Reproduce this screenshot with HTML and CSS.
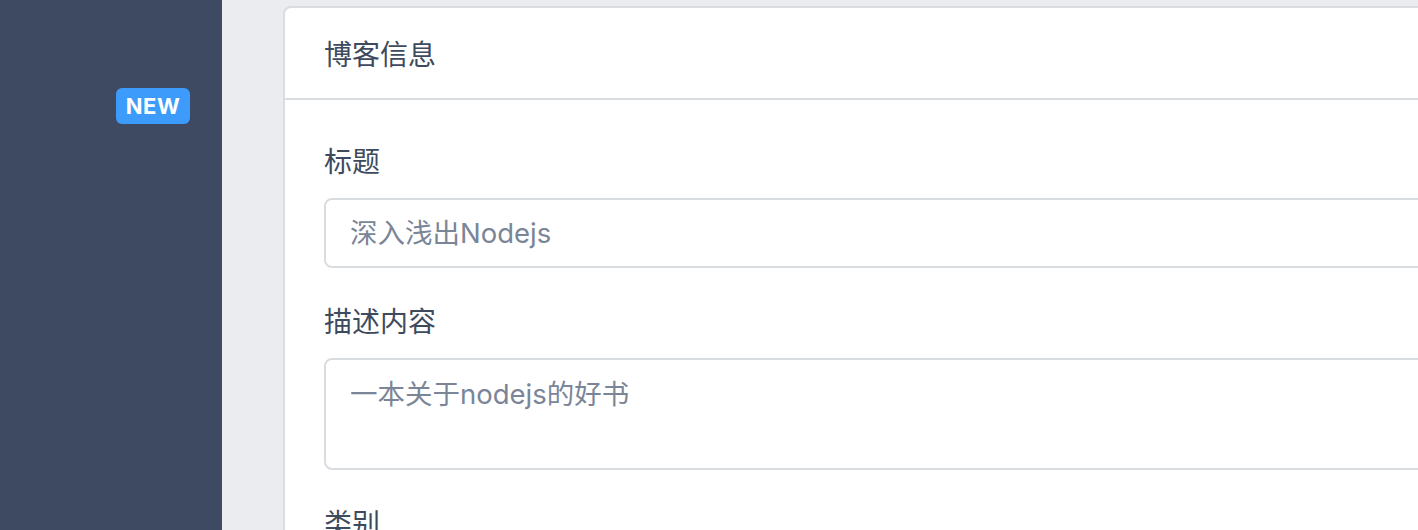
FILE: index.html
```html
<!DOCTYPE html>
<html lang="zh">
<head>
<meta charset="utf-8">
<title>博客信息</title>
<link rel="stylesheet" href="styles.css">
</head>
<body>
<div class="layout">
  <aside class="sidebar">
    <div class="sidebar-item">
      <span class="badge">NEW</span>
    </div>
  </aside>
  <main class="main">
    <section class="card">
      <header class="card-header">博客信息</header>
      <div class="card-body">
        <div class="field">
          <label class="field-label">标题</label>
          <input class="input" type="text" placeholder="深入浅出Nodejs">
        </div>
        <div class="field">
          <label class="field-label">描述内容</label>
          <textarea class="input textarea" placeholder="一本关于nodejs的好书"></textarea>
        </div>
        <div class="field">
          <label class="field-label">类别</label>
        </div>
      </div>
    </section>
  </main>
</div>
</body>
</html>
```
FILE: styles.css
```css
html, body {
  margin: 0;
  padding: 0;
  height: 100%;
  overflow: hidden;
  background: #ebecef;
  font-family: Inter, "Noto Sans CJK SC", sans-serif;
}
.layout {
  display: flex;
  height: 530px;
}
.sidebar {
  width: 222px;
  flex: none;
  background: #3d4a61;
  padding-top: 88px;
  box-sizing: border-box;
}
.sidebar-item {
  display: flex;
  justify-content: flex-end;
  padding-right: 32px;
}
.badge {
  display: inline-flex;
  align-items: center;
  justify-content: center;
  width: 74px;
  height: 36px;
  border-radius: 6px;
  background: #3c9bfb;
  color: #fff;
  font-weight: 700;
  font-size: 22px;
  letter-spacing: 0.5px;
}
.main {
  flex: 1;
  padding: 6px 0 0 61px;
  min-width: 0;
}
.card {
  width: 1400px;
  background: #fff;
  border: 2px solid #d9dce1;
  border-right: none;
  border-radius: 8px 0 0 0;
  height: 700px;
}
.card-header {
  height: 90px;
  display: flex;
  align-items: center;
  padding-left: 39px;
  font-size: 28px;
  color: #3e4a5d;
  border-bottom: 2px solid #d9dce1;
}
.card-body {
  padding: 42px 0 0 39px;
}
.field {
  display: flex;
  flex-direction: column;
  margin-bottom: 34px;
}
.field-label {
  font-size: 28px;
  line-height: 40px;
  color: #3e4a5d;
  margin-bottom: 16px;
}
.input {
  box-sizing: border-box;
  width: 1200px;
  height: 70px;
  border: 2px solid #d9dce1;
  border-radius: 8px;
  padding: 0 24px;
  font-family: inherit;
  font-size: 27.5px;
  color: #3e4a5d;
  outline: none;
  background: #fff;
}
.input::placeholder {
  color: #7b8598;
}
.textarea {
  height: 112px;
  padding: 14px 24px;
  resize: none;
  line-height: 40px;
}
```
